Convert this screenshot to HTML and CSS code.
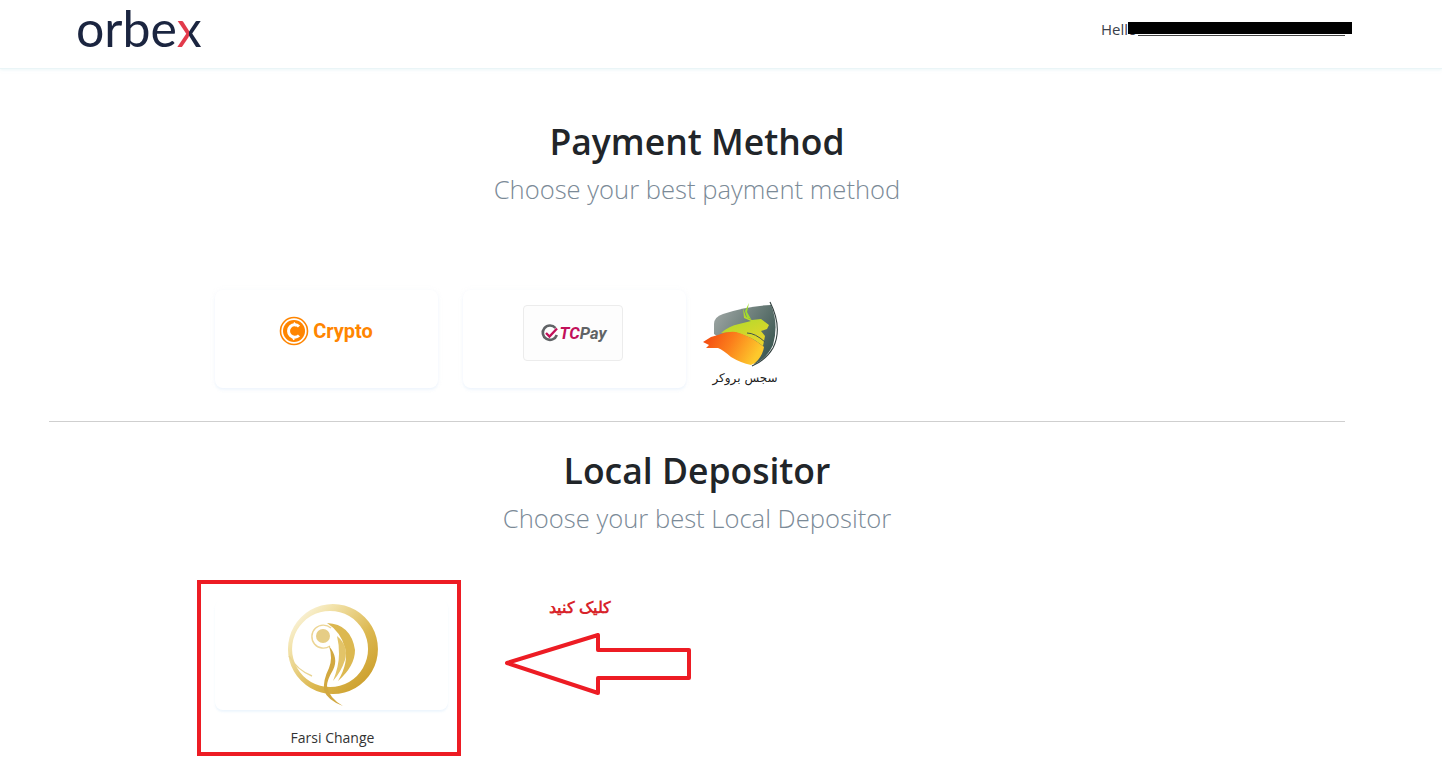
FILE: index.html
```html
<!DOCTYPE html>
<html lang="en">
<head>
  <meta charset="UTF-8">
  <meta name="viewport" content="width=device-width, initial-scale=1.0">
  <title>Payment Method</title>
  <link rel="stylesheet" href="styles.css">
</head>
<body>

  <header class="topbar">
    <div class="logo">orbe<span class="logoX">x</span></div>
    <div class="userBox">
      Hello
      <span class="userMail"></span>
      <span class="userMask"></span>
    </div>
  </header>

  <main class="content">
    <section class="methods">
      <h1>Payment Method</h1>
      <p class="sub">Choose your best payment method</p>

      <div class="cardRow">
        <div class="card">
          <div class="cryptoLogo">
            <svg width="30" height="30" viewBox="0 0 30 30">
              <circle cx="15" cy="15" r="13.5" fill="none" stroke="#ff8500" stroke-width="1.6"/>
              <circle cx="15" cy="15" r="11" fill="#ff8500"/>
              <path d="M20 10.5 A6.2 6.2 0 1 0 20 19.5" fill="none" stroke="#fff" stroke-width="3"/>
              <path d="M15 6.5 L17 10 M13 20 L15 24" stroke="#fff" stroke-width="1.6"/>
            </svg>
            <span>Crypto</span>
          </div>
        </div>

        <div class="card">
          <div class="tcBox">
            <svg width="20" height="20" viewBox="0 0 20 20">
              <path d="M15.5 5 A7.2 7.2 0 1 0 16.8 12" fill="none" stroke="#606366" stroke-width="2.6"/>
              <path d="M6 10 L9.5 13.5 L17 5.5" fill="none" stroke="#c2105a" stroke-width="2.4"/>
            </svg>
            <span class="tcRed">TC</span><span class="tcGrey">Pay</span>
          </div>
        </div>

        <div class="brokerLogo">
          <svg width="80" height="68" viewBox="0 0 80 68">
            <defs>
              <linearGradient id="shield" x1="0" y1="0" x2="1" y2="0.6">
                <stop offset="0" stop-color="#a3aaa8"/>
                <stop offset="1" stop-color="#3f5a54"/>
              </linearGradient>
              <linearGradient id="beast" x1="0" y1="0" x2="1" y2="0.3">
                <stop offset="0" stop-color="#f2410f"/>
                <stop offset="0.5" stop-color="#fb7d1b"/>
                <stop offset="1" stop-color="#fdc92c"/>
              </linearGradient>
              <linearGradient id="stag" x1="0.2" y1="0" x2="0.7" y2="1">
                <stop offset="0" stop-color="#9fdc2c"/>
                <stop offset="1" stop-color="#e9d42a"/>
              </linearGradient>
            </defs>
            <path d="M13 24 Q13 17 22 14 Q46 6 70 5 Q78 24 72 45 Q66 58 54 64 L13 34 Z" fill="url(#shield)"/>
            <path d="M68 25 L60 19 L51 20 L45 17 L42 8 L43 18 L50 21 L38 24 Q28 26 20 33 L33 32 Q50 36 62 46 L64 36 L60 31 L66 29 Z" fill="url(#stag)"/>
            <path d="M48 3 L46 12 L50 19 L46 18 L44 11 Z" fill="#9fdc2c"/>
            <path d="M2 42 L10 37 L17 35 Q26 31 35 32 Q50 36 63 47 Q62 54 57 60 Q54 64 50 65 Q40 63 30 57 Q22 50 17 48 L5 48 L8 45 Z" fill="url(#beast)"/>
            <path d="M46 33 Q54 33 64 42" fill="none" stroke="#42544e" stroke-width="1"/>
            <path d="M69 2 Q82 28 72 48 Q65 60 51 66" fill="none" stroke="#33413f" stroke-width="1.1"/>
          </svg>
          <span class="brokerName" lang="fa" dir="rtl">سجس بروکر</span>
        </div>
      </div>
    </section>

    <hr class="divider">

    <section class="depositors">
      <h1>Local Depositor</h1>
      <p class="sub">Choose your best Local Depositor</p>

      <div class="cardRow depositRow">
        <div class="depositItem">
          <div class="card cardGold">
            <svg width="100" height="112" viewBox="0 0 100 112">
              <defs>
                <linearGradient id="gold" x1="0" y1="0" x2="1" y2="1">
                  <stop offset="0" stop-color="#fff"/>
                  <stop offset="0.25" stop-color="#f3e4ae"/>
                  <stop offset="0.6" stop-color="#dcb850"/>
                  <stop offset="1" stop-color="#c6951f"/>
                </linearGradient>
              </defs>
              <path fill-rule="evenodd" fill="url(#gold)" d="M50 4 A45 45 0 1 1 49.9 4 Z M47 11 A38 38 0 1 0 47.1 11 Z"/>
              <circle cx="40" cy="36" r="7" fill="#e6cd85"/>
              <path d="M48 28 A11.5 11.5 0 1 0 47 46" fill="none" stroke="#ecd594" stroke-width="1.4"/>
              <path d="M44 23 Q68 24 72 50 Q72 66 55 81 Q66 62 62 48 Q58 32 44 23 Z" fill="#dcb850"/>
              <path d="M54 36 Q66 46 62 60 Q58 72 50 81 Q56 66 56 54 Q56 44 54 36 Z" fill="#e3c468"/>
              <path d="M46 46 Q56 58 50 70 Q44 80 44 86 Q46 98 60 106 Q44 100 41 90 Q40 80 46 68 Q50 58 46 46 Z" fill="#d2a840"/>
              <path d="M6 56 Q14 70 29 76" fill="none" stroke="#e9d594" stroke-width="1.4"/>
            </svg>
          </div>
          <div class="cardName">Farsi Change</div>
        </div>
      </div>
    </section>
  </main>

  <!-- red notes drawn over the page -->
  <div class="noteBox"></div>
  <div class="noteText" lang="fa" dir="rtl">کلیک کنید</div>
  <svg class="noteArrow" width="190" height="66" viewBox="0 0 190 66">
    <path d="M4 31 L95 3 L95 18 L186 18 L186 46 L95 46 L95 61 Z" fill="#fff" stroke="#ed1c24" stroke-width="4" stroke-linejoin="round"/>
  </svg>

</body>
</html>
```

FILE: styles.css
```css
body {
  margin: 0;
  height: 784px;
  overflow: hidden;
  background-color: #fff;
  color: #212529;
  font-family: "Open Sans", sans-serif;
}

.topbar {
  height: 69px;
  box-sizing: border-box;
  padding: 0 90px 0 76px;
  display: flex;
  justify-content: space-between;
  align-items: center;
  border-bottom: 1px solid #eaf5f7;
  box-shadow: 0 1px 3px rgba(200, 230, 235, 0.35);
}

.logo {
  font-family: "Lato", sans-serif;
  font-size: 50px;
  line-height: 50px;
  letter-spacing: 0;
  color: #1b2540;
  margin-top: -13px;
}

.logoX {
  background: linear-gradient(90deg, #e23a4b 50%, #1b2540 50%);
  -webkit-background-clip: text;
  background-clip: text;
  color: transparent;
}

.userBox {
  position: relative;
  width: 251px;
  font-size: 15px;
  line-height: 20px;
  color: #3b3f4a;
  margin-top: -11px;
}

.userMail {
  position: absolute;
  left: 37px;
  right: 7px;
  top: 16px;
  border-bottom: 1px solid #444;
}

.userMask {
  position: absolute;
  left: 27px;
  right: 0;
  top: 3px;
  height: 12px;
  background-color: #000;
}

.content {
  width: 1296px;
  margin-left: 49px;
}

h1 {
  margin: 0;
  text-align: center;
  font-size: 35.5px;
  line-height: 44px;
  font-weight: 600;
}

.sub {
  margin: 7px 0 0;
  text-align: center;
  font-size: 25.6px;
  line-height: 40px;
  font-weight: 300;
  color: #7b8a97;
}

.methods {
  padding-top: 50px;
}

.cardRow {
  display: flex;
  align-items: flex-start;
  margin-top: 80px;
  padding-left: 166px;
}

.card {
  width: 223px;
  height: 98px;
  margin-right: 25px;
  box-sizing: border-box;
  display: flex;
  justify-content: center;
  background-color: #fff;
  border-radius: 8px;
  box-shadow: 0 2px 3px rgba(200, 225, 250, 0.25), 0 0 4px rgba(235, 240, 248, 0.25);
}

.cryptoLogo {
  display: flex;
  align-items: center;
  gap: 4px;
  height: 30px;
  margin-top: 26px;
  margin-left: -1px;
  font-family: "Roboto", sans-serif;
  font-size: 20px;
  font-weight: 700;
  color: #ff8500;
}

.tcBox {
  width: 100px;
  height: 56px;
  margin-top: 15px;
  margin-left: -3px;
  box-sizing: border-box;
  border: 1px solid #ececec;
  border-radius: 4px;
  background-color: #fdfdfd;
  display: flex;
  justify-content: center;
  align-items: center;
  font-family: "Roboto", sans-serif;
  font-size: 16.5px;
  font-weight: 700;
  font-style: italic;
}

.tcRed {
  color: #c2105a;
}

.tcGrey {
  color: #606366;
}

.brokerLogo {
  display: flex;
  flex-direction: column;
  align-items: flex-start;
  width: 84px;
  margin-left: -10px;
  margin-top: 10px;
}

.brokerName {
  width: 68px;
  margin-left: 10px;
  margin-top: 3px;
  font-family: "DejaVu Sans", sans-serif;
  font-size: 12px;
  line-height: 14px;
  color: #222;
  text-align: center;
}

.divider {
  margin: 33px 0 0;
  border: 0;
  border-top: 1px solid #cfcfcf;
}

.depositors {
  padding-top: 26px;
}

.depositRow {
  margin-top: 61px;
}

.depositItem {
  width: 235px;
}

.cardGold {
  width: 233px;
  height: 110px;
  margin-right: 0;
  box-shadow: 0 2px 2px rgba(200, 225, 250, 0.3);
}

.cardGold svg {
  margin-left: 3px;
}

.cardName {
  margin-top: 18px;
  text-align: center;
  font-size: 14px;
  line-height: 20px;
  color: #333;
}

.noteBox {
  position: absolute;
  left: 197px;
  top: 580px;
  width: 256px;
  height: 168px;
  border: 4px solid #ed1c24;
}

.noteText {
  position: absolute;
  left: 540px;
  top: 598px;
  width: 80px;
  text-align: center;
  font-family: "Liberation Sans", sans-serif;
  font-size: 16px;
  line-height: 20px;
  font-weight: 700;
  color: #d8232a;
}

.noteArrow {
  position: absolute;
  left: 503px;
  top: 632px;
}
```
